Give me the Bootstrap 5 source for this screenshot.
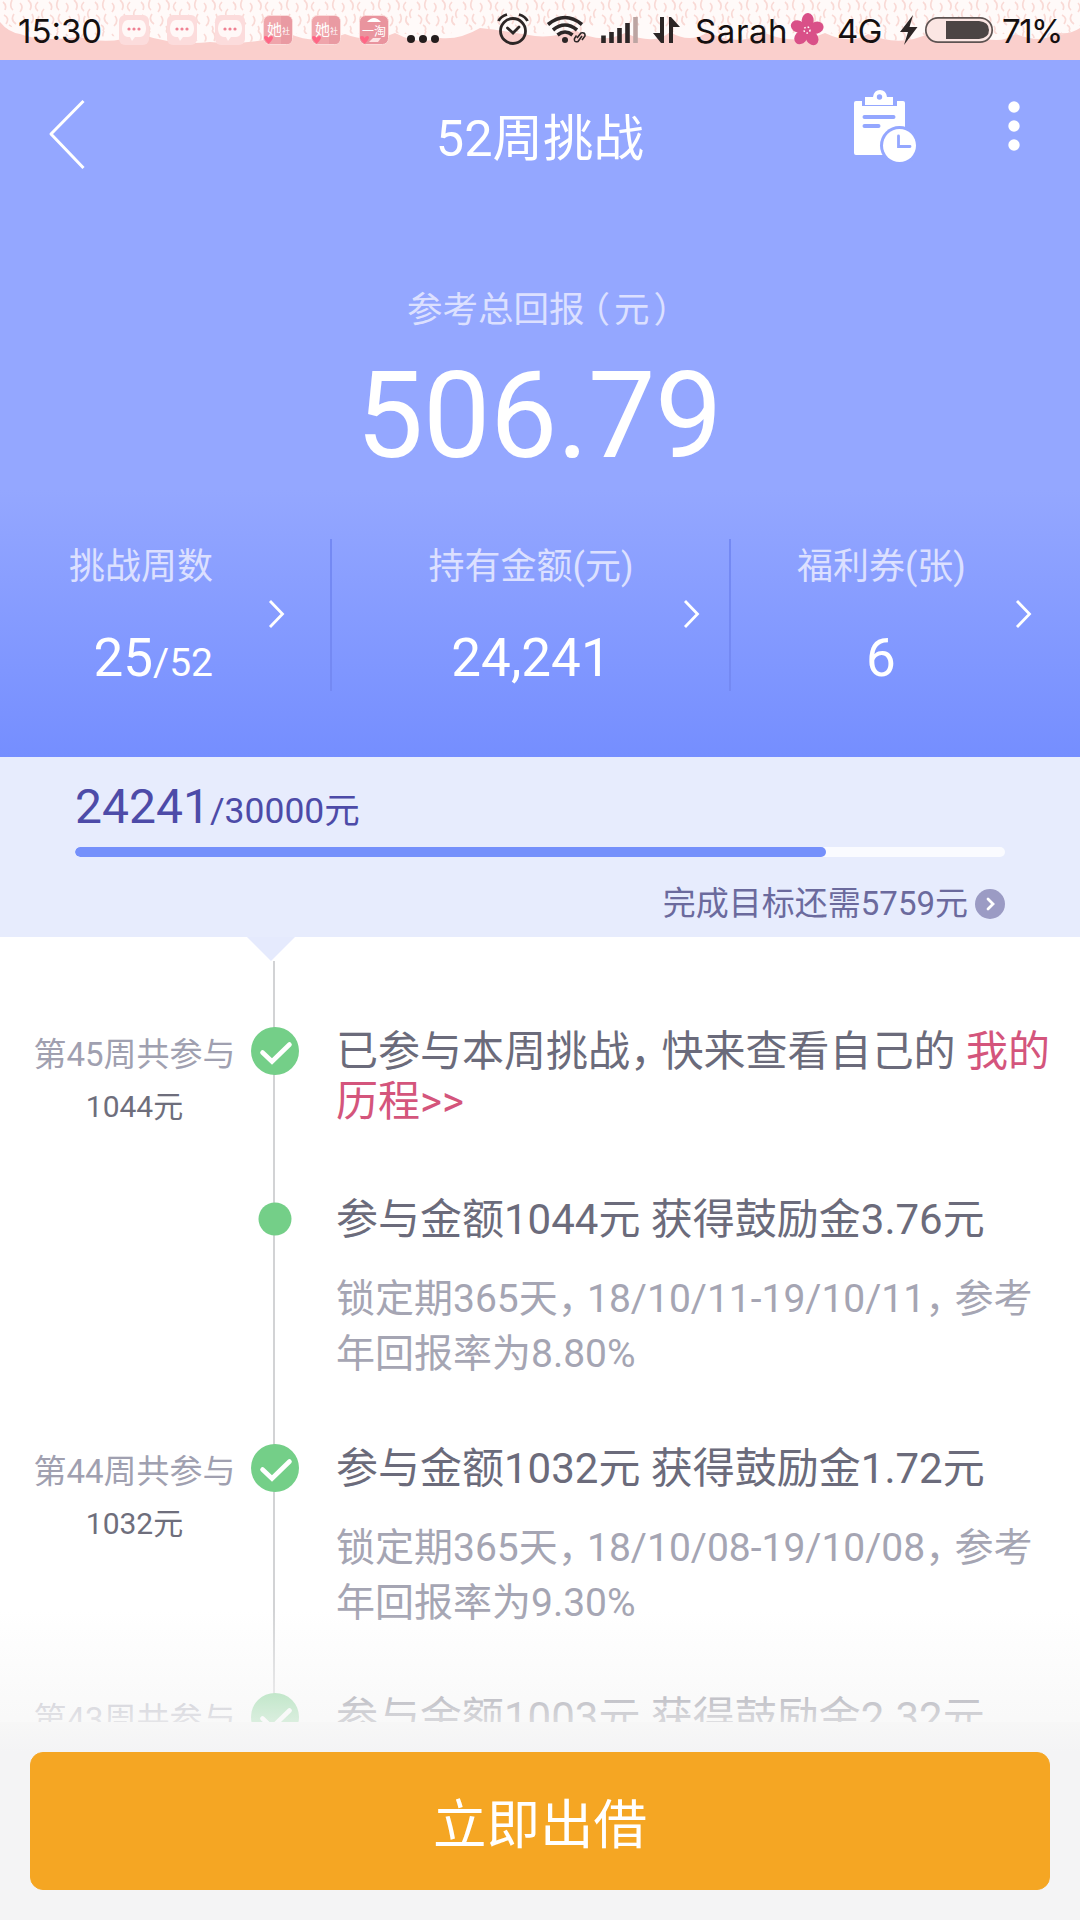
<!DOCTYPE html>
<html lang="zh-CN">
<head>
<meta charset="utf-8">
<meta name="viewport" content="width=device-width, initial-scale=1">
<title>52周挑战</title>
<link href="https://cdn.jsdelivr.net/npm/bootstrap@5.3.0/dist/css/bootstrap.min.css" rel="stylesheet">
<style>
body{font-family:Roboto,"Noto Sans CJK SC",sans-serif;background:#f4f4f5;width:1080px;height:1920px;overflow:hidden;color:#6b6b7b;-webkit-font-smoothing:antialiased}
svg{display:block;flex:none}
.statusbar{height:60px;flex:none;background:#facfcc}
.statusbar .lace{left:0;top:0}
.st-text{font:33px/60px Inter,"Open Sans",sans-serif;color:#151010;white-space:nowrap;flex:none}
.hero{height:697px;flex:none;background:linear-gradient(#94a7ff 0,#94a7ff 430px,#758eff 697px)}
.topbar{height:154px}
.topbar .side{width:300px}
.page-name{font-size:50.5px;line-height:60px;padding-top:3px}
.total-label{font-size:35.500px;line-height:40px;color:#dce0ff;margin-top:76px;padding-left:7px}
.paren-l{margin-left:-10px;margin-right:4px}
.paren-r{margin-left:4px;margin-right:-9px}
.total-num{font-size:120px;line-height:130px;margin-top:21px;letter-spacing:-.5px;padding-right:2px}
.stats{height:152px;margin-top:58px}
.stat{flex:none}
.stat+.stat{border-left:2px solid #7489f3}
.stat-label{font-size:36px;line-height:40px;color:#dce0ff;margin-top:8px;white-space:nowrap}
.stat-num{font-size:53px;line-height:60px;margin-top:41px;white-space:nowrap}
.stat-num small{font-size:39px}
.stat svg{margin-top:60px}
.goal{height:180px;flex:none;background:#e7ecfd;padding:0 75px;color:#4d4ba8}
.goal-num{font-size:48px;line-height:60px;padding-top:20px}
.goal-num small{font-size:35.500px}
.goal .progress{--bs-progress-height:10px;--bs-progress-bg:#fafbff;--bs-progress-bar-bg:#7590fb;border-radius:5px;margin-top:6px}
.goal .progress-bar{border-radius:5px}
.goal-more{font-size:33px;line-height:40px;margin-top:27px;color:#6b6a9d;gap:7px}
.feed{height:785px;flex:none;overflow:hidden;background:#fff}
.rail{left:273px;top:24px;width:2px;height:761px;background:#d2d3d5}
.notch{left:247px;top:0}
.entry{flex:none}
.week{width:251px;padding-left:15px;font-size:33px;line-height:40px;color:#a0a0b0;white-space:nowrap}
.week div+div{font-size:30px;color:#6e6e7c;margin-top:12px}
.week div{margin-left:3px}
.node{width:48px}
.entry-body{padding-left:37px;width:745px}
.entry-title{font-size:42px;line-height:50px;white-space:nowrap}
.entry-title .go{color:#d4557c}
.entry-note{font-size:39px;line-height:55px;color:#a5a5b3;margin-top:27px;white-space:nowrap}
.cm{letter-spacing:-.25em}
.fade-out{left:0;bottom:0;width:100%;height:112px;background:linear-gradient(rgba(247,247,247,0),rgba(247,247,247,.6) 75%,rgba(247,247,247,.78))}
.cta-wrap{height:198px;flex:none;padding:30px 30px 0;background:linear-gradient(#f7f7f7,#f4f4f5 30px)}
.cta{height:138px;border-radius:13px;--bs-btn-bg:#f5a623;--bs-btn-border-color:#f5a623;--bs-btn-color:#fff;font-size:53.5px;line-height:60px;padding-top:16px}
</style>
<script src="https://cdn.jsdelivr.net/npm/bootstrap@5.3.0/dist/js/bootstrap.bundle.min.js"></script>
</head>
<body class="d-flex flex-column m-0">

<svg width="0" height="0" class="position-absolute">
  <defs>
    <symbol id="chev" viewBox="0 0 18 30"><path d="M2 2 14.500 15 2 28" fill="none" stroke="#fff" stroke-width="2.800"/></symbol>
    <symbol id="tick" viewBox="0 0 48 48"><circle cx="24" cy="24" r="24" fill="#74cf88"/><path d="M11.500 25.500 21 34.500 38.500 17.500" fill="none" stroke="#fff" stroke-width="4.600" stroke-linecap="round" stroke-linejoin="miter"/></symbol>
    <symbol id="chat" viewBox="0 0 30 30"><rect width="30" height="30" rx="6" fill="#fcdcdc"/><path d="M9 5h12c8 0 8 17 0 17h-5l-3 4-2-4H9C1 22 1 5 9 5" fill="#fff8f7"/><g fill="#ef8294"><circle cx="10" cy="14" r="1.600"/><circle cx="15" cy="14" r="1.600"/><circle cx="20" cy="14" r="1.600"/></g></symbol>
    <pattern id="knit" width="46" height="31" patternUnits="userSpaceOnUse">
      <g fill="none" stroke="#f9dad6" stroke-width="1.700"><path d="M3 2q4 3 2 8M12 0q-3 7 1 10M20 3q4 4 0 9M28 0q5 4 2 10M38 2q-5 5 0 9M44 9q-4 4-1 9M4 15q6 3 2 9M14 14q-4 6 2 10M23 16q4 5-1 10M32 14q3 6-1 9M39 16q-3 6 2 9M9 25q4 2 2 6M28 26q2 3 0 5"/></g>
    </pattern>
  </defs>
</svg>

<div class="statusbar position-relative">
  <svg class="lace position-absolute" width="1080" height="60">
    <path d="M0 0H1080V28Q1068 36 1055 32Q1045 45 1015 34Q1000 46 970 34Q955 44 930 33Q900 48 868 34Q850 45 825 33Q795 46 765 33Q735 47 708 32Q690 44 670 32Q655 46 625 33Q600 45 575 30Q555 38 535 36Q500 30 480 28Q460 40 440 38Q420 46 395 33Q370 44 345 34Q315 45 290 34Q250 46 210 42Q175 46 140 34Q110 46 80 37Q40 42 20 34Q8 32 0 22Z" fill="#fffaf9"/>
    <path d="M0 0H1080V28Q1045 45 1015 34Q970 34 930 33Q900 48 868 34Q825 33 765 33Q735 47 708 32H575Q535 36 480 28Q440 38 395 33Q345 34 290 34Q250 46 210 42Q140 34 80 37Q20 34 0 22Z" fill="url(#knit)"/>
  </svg>
  <div class="position-relative d-flex align-items-center h-100">
    <span class="st-text" style="width:119px;padding-left:18px;padding-top:1px">15:30</span>
    <div class="d-flex" style="gap:18px">
      <svg width="30" height="30"><use href="#chat"/></svg>
      <svg width="30" height="30"><use href="#chat"/></svg>
      <svg width="30" height="30"><use href="#chat"/></svg>
      <svg width="30" height="30"><rect x=".5" y=".5" width="29" height="29" rx="6" fill="#efa5ab" stroke="#fbdcdb"/><path d="M18 1h6q5 0 5 6v16q0 6-5 6h-6z" fill="#e99aa2"/><text x="4" y="20" font-size="15" fill="#fff">她</text><text x="19" y="19" font-size="8" fill="#fff">社</text><path d="M5.500 29Q-2 21 3 21q2 0 2.500 2 1-2 3-2 4 1-3 8" fill="#ff6685"/></svg>
      <svg width="30" height="30"><rect x=".5" y=".5" width="29" height="29" rx="6" fill="#efa5ab" stroke="#fbdcdb"/><path d="M18 1h6q5 0 5 6v16q0 6-5 6h-6z" fill="#e99aa2"/><text x="4" y="20" font-size="15" fill="#fff">她</text><text x="19" y="19" font-size="8" fill="#fff">社</text><path d="M5.500 29Q-2 21 3 21q2 0 2.500 2 1-2 3-2 4 1-3 8" fill="#ff6685"/></svg>
      <svg width="30" height="30"><rect x=".5" y=".5" width="29" height="29" rx="6" fill="#e9949e" stroke="#fbdcdb"/><path d="M8 7q7-8 14 0z" fill="#fff"/><text x="3" y="21" font-size="12" fill="#fff">一淘</text><path d="M10 27 14 23h8l-3 4z" fill="#fde3e4"/><path d="M5.500 29Q-2 21 3 21q2 0 2.500 2 1-2 3-2 4 1-3 8" fill="#ff6685"/></svg>
    </div>
    <svg width="303" height="60" viewBox="389 0 303 60" fill="none" stroke="#2c2626">
      <g fill="#241d1d" stroke="none"><circle cx="411" cy="39" r="4"/><circle cx="423" cy="39" r="4"/><circle cx="435" cy="39" r="4"/></g>
      <circle cx="513" cy="31" r="12.500" stroke-width="2.800"/><path d="m507.500 28 5.500 5 6-6" stroke-width="2.800" stroke-linecap="round"/><path d="M498.500 21q2-4.500 8.500-6.500M527.500 21q-2-4.500-8.500-6.500" stroke-width="2.800"/>
      <path d="M548 24.500q17-14 34 0M553 30q12-10 24 0M557.500 35q7.500-6 15 0" stroke-width="3.600"/><circle cx="565" cy="40" r="3" fill="#2c2626" stroke="none"/><path d="m577 38 4-5q4.500-1 4 3l-3 4M582 36l-4 5.500q-4.500 1-3.500-3l2-3" stroke-width="1.600"/>
      <path d="M603.500 43v-7.500M611.500 43v-11M619.500 43v-15M627.500 43v-20" stroke-width="4.600"/><path d="M635.500 43v-26" stroke="#bda5a2" stroke-width="4.600"/>
      <path d="M664 17v26h-3l-8-10h7V17zM669 43V17h2l9 10h-7v16z" fill="#2c2626" stroke="none"/>
    </svg>
    <span class="st-text" style="width:97px;padding-left:3px;padding-top:1px;letter-spacing:.6px">Sarah</span>
    <svg width="36" height="34" viewBox="-18 -17 36 34"><g fill="#d95088" transform="rotate(4)"><ellipse cy="-9.500" rx="6" ry="7.500"/><ellipse cy="-9.500" rx="6" ry="7.500" transform="rotate(72)"/><ellipse cy="-9.500" rx="6" ry="7.500" transform="rotate(144)"/><ellipse cy="-9.500" rx="6" ry="7.500" transform="rotate(216)"/><ellipse cy="-9.500" rx="6" ry="7.500" transform="rotate(288)"/><circle r="5"/></g><circle r="3" fill="none" stroke="#fff" stroke-width="1.500" stroke-dasharray="1.600 2"/></svg>
    <span class="st-text" style="width:71px;padding-left:12px;padding-top:1px;letter-spacing:-.5px">4G</span>
    <svg width="106" height="60" viewBox="896 0 106 60"><path d="M913 15 900 32h8l-4 13 13.500-18h-8z" fill="#2c2626"/><rect x="925.800" y="17.800" width="66.400" height="24.400" rx="12.200" fill="#fbe6e3" stroke="#5d5352" stroke-width="1.700"/><path d="M946 21h33q10 1 10 9t-10 9h-33z" fill="#4c4544"/></svg>
    <span class="st-text" style="letter-spacing:-1.500px;padding-top:1px">71%</span>
  </div>
</div>

<header class="hero text-white d-flex flex-column">
  <nav class="topbar d-flex align-items-center justify-content-between">
    <div class="side ps-5"><svg width="38" height="72" viewBox="0 0 38 72" style="margin-top:-4px"><path d="M35.500 2 3 35 35.500 69" fill="none" stroke="#fff" stroke-width="3" stroke-linejoin="round"/></svg></div>
    <div class="page-name">52周挑战</div>
    <div class="side d-flex align-items-center justify-content-end">
      <svg width="64" height="74" viewBox="0 0 64 74" style="margin-right:92px;margin-top:-23px"><path d="M4 12h6v5h35v-5h6q2 0 2 2v52H4q-2 0-2-2V14q0-2 2-2" fill="#fff"/><path d="M13 8h8q1-7 7-7t7 7h6v8H13z" fill="#fff"/><circle cx="27.500" cy="8" r="2.700" fill="#94a7ff"/><path d="M12.500 28h29M12.500 37h14" stroke="#94a7ff" stroke-width="4" stroke-linecap="round"/><circle cx="47.500" cy="56.500" r="19.500" fill="#94a7ff"/><circle cx="47.500" cy="56.500" r="16.500" fill="#fff"/><path d="M46.500 47v10.500H58" fill="none" stroke="#94a7ff" stroke-width="2.800" stroke-linecap="round"/></svg>
      <svg width="12" height="52" viewBox="0 0 12 52" style="margin-right:60px;margin-top:-22px" fill="#fff"><circle cx="6" cy="7" r="5.700"/><circle cx="6" cy="26" r="5.700"/><circle cx="6" cy="45" r="5.700"/></svg>
    </div>
  </nav>
  <div class="total-label text-center">参考总回报<span class="paren-l">（</span>元<span class="paren-r">）</span></div>
  <div class="total-num text-center">506.79</div>
  <div class="stats d-flex">
    <div class="stat d-flex" style="width:330px;padding-left:69px"><div style="width:144px" class="text-end"><div class="stat-label">挑战周数</div><div class="stat-num">25<small>/52</small></div></div><svg width="18" height="30" style="margin-left:55px"><use href="#chev"/></svg></div>
    <div class="stat d-flex" style="width:399px;padding-left:96px"><div style="width:206px" class="text-center"><div class="stat-label">持有金额(元)</div><div class="stat-num">24,241</div></div><svg width="18" height="30" style="margin-left:49px"><use href="#chev"/></svg></div>
    <div class="stat d-flex" style="width:351px;padding-left:66px"><div style="width:168px" class="text-center"><div class="stat-label">福利券(张)</div><div class="stat-num">6</div></div><svg width="18" height="30" style="margin-left:50px"><use href="#chev"/></svg></div>
  </div>
</header>

<section class="goal">
  <div class="goal-num">24241<small>/30000元</small></div>
  <div class="progress"><div class="progress-bar" style="width:80.8%"></div></div>
  <div class="goal-more d-flex justify-content-end align-items-center">完成目标还需5759元<svg width="30" height="30"><circle cx="15" cy="15" r="15" fill="#9b9bc4"/><path d="m13 10 5 5-5 5" fill="none" stroke="#fff" stroke-width="2.800" stroke-linecap="round"/></svg></div>
</section>

<main class="feed position-relative">
  <div class="rail position-absolute"></div>
  <svg class="notch position-absolute" width="48" height="24"><path d="M0 0H48L24 24Z" fill="#e5eafd"/></svg>
  <article class="entry d-flex position-relative" style="padding-top:90px;height:257px">
    <div class="week text-center" style="padding-top:8px"><div>第45周共参与</div><div>1044元</div></div>
    <svg class="node" height="48"><use href="#tick"/></svg>
    <div class="entry-body"><div class="entry-title">已参与本周挑战<span class="cm">，</span>快来查看自己的 <span class="go">我的<br>历程&gt;&gt;</span></div></div>
  </article>
  <article class="entry d-flex position-relative" style="height:250px">
    <div class="week"></div>
    <svg class="node" height="50"><circle cx="24" cy="25" r="16.500" fill="#74cf88"/></svg>
    <div class="entry-body" style="padding-top:1px"><div class="entry-title">参与金额1044元 获得鼓励金3.76元</div><div class="entry-note">锁定期365天<span class="cm">，</span>18/10/11-19/10/11<span class="cm">，</span>参考<br>年回报率为8.80%</div></div>
  </article>
  <article class="entry d-flex position-relative" style="height:249px">
    <div class="week text-center" style="padding-top:8px"><div>第44周共参与</div><div>1032元</div></div>
    <svg class="node" height="48"><use href="#tick"/></svg>
    <div class="entry-body"><div class="entry-title">参与金额1032元 获得鼓励金1.72元</div><div class="entry-note">锁定期365天<span class="cm">，</span>18/10/08-19/10/08<span class="cm">，</span>参考<br>年回报率为9.30%</div></div>
  </article>
  <article class="entry d-flex position-relative">
    <div class="week text-center" style="padding-top:7px"><div>第43周共参与</div></div>
    <svg class="node" height="48"><use href="#tick"/></svg>
    <div class="entry-body"><div class="entry-title">参与金额1003元 获得鼓励金2.32元</div></div>
  </article>
  <div class="fade-out position-absolute"></div>
</main>

<footer class="cta-wrap"><button class="btn cta w-100">立即出借</button></footer>
</body>
</html>
